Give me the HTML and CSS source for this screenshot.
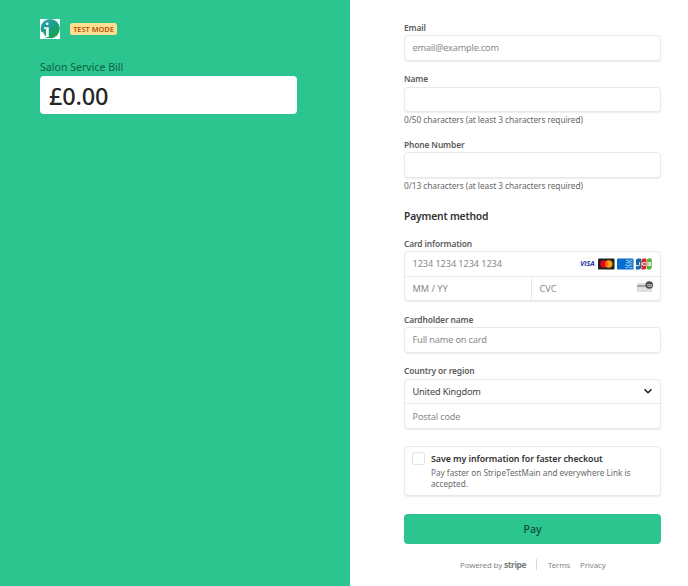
FILE: index.html
```html
<!DOCTYPE html>
<html lang="en">
<head>
<meta charset="utf-8">
<title>Salon Service Bill</title>
<link rel="stylesheet" href="styles.css">
</head>
<body>
<main class="checkout">
  <section class="summary">
    <header class="brand">
      <svg class="logo" viewBox="0 0 20 20" aria-hidden="true">
        <defs><linearGradient id="globe" x1="0" y1="0" x2="0.6" y2="1"><stop offset="0" stop-color="#35a9b5"/><stop offset=".45" stop-color="#1d9c91"/><stop offset="1" stop-color="#16a34e"/></linearGradient></defs>
        <rect width="20" height="20" fill="#fff"/>
        <circle cx="10.2" cy="9.6" r="9.6" fill="url(#globe)"/>
        <circle cx="7.2" cy="4.8" r="1.4" fill="#e8fbf7"/>
        <path d="M4 8.3h4.8V18H6V10H4z" fill="#e8fbf7"/>
        <path d="M0 12l3.5 1.5L6 18v2H0z" fill="#fff" opacity=".85"/>
      </svg>
      <span class="test-badge">TEST MODE</span>
    </header>
    <h1 class="product">Salon Service Bill</h1>
    <div class="amount"><span>£0.00</span></div>
  </section>
  <form class="form">
    <div class="field">
      <div class="label"><span>Email</span></div>
      <div class="box input"><span class="example">email@example.com</span></div>
    </div>
    <div class="field">
      <div class="label"><span>Name</span></div>
      <div class="box input"></div>
      <div class="help">0/50 characters (at least 3 characters required)</div>
    </div>
    <div class="field">
      <div class="label"><span>Phone Number</span></div>
      <div class="box input"></div>
      <div class="help">0/13 characters (at least 3 characters required)</div>
    </div>
    <h2 class="heading">Payment method</h2>
    <div class="field">
      <div class="label"><span>Card information</span></div>
      <div class="box group">
        <div class="row number"><span class="digits-hint">1234 1234 1234 1234</span>
          <svg class="cards" viewBox="0 0 74 12" aria-hidden="true">
            <rect x=".5" y=".5" width="16" height="11" rx="1.2" fill="#fff" stroke="#f0f0f2" stroke-width=".6"/>
            <text class="visa" x="1.2" y="8.4" textLength="14.4" lengthAdjust="spacingAndGlyphs">VISA</text>
            <rect x="19" y=".4" width="16.5" height="11.2" rx="1.2" fill="#20201f"/>
            <circle cx="25" cy="6" r="3.8" fill="#eb001b"/><circle cx="29.7" cy="6" r="3.8" fill="#f79e1b"/><path d="M27.35 3a3.8 3.8 0 0 1 0 6 3.8 3.8 0 0 1 0-6" fill="#ff5f00"/>
            <rect x="38" y=".4" width="16.5" height="11.2" rx="1.2" fill="#016fd0"/>
            <path d="M47 2.3h2.2l1 1.6 1-1.6h2.3M47 4.8h6.5M46 7h2l1 1 1-1h3.5M46.5 9.7h2l1-1 1 1h3" fill="none" stroke="#a5d0f0" stroke-width="1"/>
            <path d="M58.7.4H62v9.2a2 2 0 0 1-2 2h-3V2.4a2 2 0 0 1 1.7-2z" fill="#1267ac"/>
            <path d="M64.2.4h3.2v9.2a2 2 0 0 1-2 2h-3V2.4a2 2 0 0 1 1.8-2z" fill="#d42a25"/>
            <path d="M69.7.4h3v9.2a2 2 0 0 1-2 2h-2.8V2.4a2 2 0 0 1 1.8-2z" fill="#59ad3b"/>
            <path d="M57 7.5q3.6 1.2 3.6-.7V4.3M66.8 4.800q-3.6-1-3.6 1.2t3.6 1.2M68.3 4.7h3v2.7h-3M68.3 6h3" fill="none" stroke="#fff" stroke-width="1"/>
          </svg>
        </div>
        <div class="split">
          <div class="row expiry"><span class="date-hint">MM / YY</span></div>
          <div class="row cvc"><span class="date-hint">CVC</span>
            <svg class="cvc-icon" viewBox="0 0 18 12" aria-hidden="true">
              <rect x="1" y="2" width="15" height="9" rx="1" fill="#dedede"/><path d="M1 4h15v2H1z" fill="#a5a5a5"/><path d="M3 8h7" stroke="#eee"/>
              <circle cx="13.3" cy="4" r="3.8" fill="#4d4d4d"/><text class="digits" x="10.7" y="5.5" textLength="5.2">123</text>
            </svg>
          </div>
        </div>
      </div>
    </div>
    <div class="field">
      <div class="label"><span>Cardholder name</span></div>
      <div class="box input"><span>Full name on card</span></div>
    </div>
    <div class="field">
      <div class="label"><span>Country or region</span></div>
      <div class="box group">
        <div class="row country"><span>United Kingdom</span>
          <svg class="chevron" viewBox="0 0 10 8" aria-hidden="true"><path d="M1.5 2.2 5 5.7l3.5-3.5" fill="none" stroke="#1a1a1a" stroke-width="1.5"/></svg>
        </div>
        <div class="row postal"><span>Postal code</span></div>
      </div>
    </div>
    <div class="box save">
      <span class="checkbox"></span>
      <div>
        <div class="save-title">Save my information for faster checkout</div>
        <div class="save-text">Pay faster on StripeTestMain and everywhere Link is<br>accepted.</div>
      </div>
    </div>
    <button class="pay" type="button">Pay</button>
    <footer class="footer">
      <span class="powered">Powered by</span><b class="stripe">stripe</b><i class="bar"></i><span class="terms">Terms</span><span class="privacy">Privacy</span>
    </footer>
  </form>
</main>
</body>
</html>
```

FILE: styles.css
```css
* { box-sizing: border-box; }
body { margin: 0; background: #fff; font-family: "Noto Sans", "Open Sans", sans-serif; }
.checkout { display: grid; grid-template-columns: 350px 338px; height: 586px; overflow: hidden; white-space: nowrap; }
.summary { background: #2dc58f; padding: 19px 53px 0 40px; }
.brand { display: flex; align-items: center; height: 20px; }
.logo { width: 20px; height: 20px; }
.test-badge { margin-left: 10px; width: 47px; height: 12px; border-radius: 2.5px; background: #ffde92; color: #b45309; font-size: 7.4px; font-weight: 600; line-height: 12.5px; text-align: center; }
.product { margin: 20px 0 0; height: 17px; line-height: 17px; font-size: 10.5px; font-weight: 400; color: #0c6143; letter-spacing: .04px; }
.amount { height: 38px; border-radius: 4px; background: #fff; padding-left: 9px; line-height: 41px; font-size: 23.5px; font-weight: 500; color: #262626; letter-spacing: -.2px; }
.form { padding: 19px 27px 0 54px; font-size: 9.2px; letter-spacing: -.16px; color: #8a8a8a; }
.field { margin-bottom: 9.5px; }
.label { height: 16.4px; line-height: 17px; font-size: 8.4px; font-weight: 600; letter-spacing: -.12px; color: #5c5c5c; }
.box { border: 1px solid #e9e9e9; border-radius: 4px; background: #fff; box-shadow: 0 1px 1.5px rgba(0,0,0,.08); }
.input { height: 25.6px; line-height: 24px; padding-left: 7.5px; }
.example { letter-spacing: -.2px; }
.digits-hint { letter-spacing: -.1px; }
.date-hint { letter-spacing: 0; }
.help { height: 14px; line-height: 15px; font-size: 8.3px; letter-spacing: -.04px; color: #666; }
.heading { margin: 0 0 5.3px; padding-top: 3px; height: 28px; line-height: 25px; font-size: 10.3px; font-weight: 600; letter-spacing: -.18px; color: #333; }
.group { height: 50px; }
.row { display: flex; align-items: center; justify-content: space-between; height: 24.5px; padding-left: 7.5px; }
.number, .country { border-bottom: 1px solid #e9e9e9; }
.cards { width: 74px; height: 12px; margin-right: 7px; }
.visa { font: italic 700 6.2px "Open Sans", sans-serif; letter-spacing: 0; fill: #2732a5; }
.split { display: grid; grid-template-columns: 127px 128px; }
.expiry { border-right: 1px solid #e9e9e9; }
.cvc-icon { width: 18px; height: 12px; margin: -4px 6px 0 0; }
.digits { font: 700 3.5px "Open Sans", sans-serif; letter-spacing: 0; fill: #ddd; }
.country { color: #444; }
.chevron { width: 10px; height: 8px; margin-right: 7px; }
.save { display: flex; height: 49.5px; margin-top: 17.5px; padding: 5px 7px; }
.checkbox { flex: none; width: 13px; height: 13px; margin: 0 6px 0 0; border: 1px solid #e3e3e3; border-radius: 2.5px; }
.save-title { height: 14.5px; line-height: 13px; font-size: 8.9px; font-weight: 600; letter-spacing: -.08px; color: #333; }
.save-text { line-height: 11.5px; font-size: 8.2px; letter-spacing: 0; color: #6a6a6a; }
.pay { display: block; width: 257px; height: 30px; margin-top: 18px; padding: 0; border: 0; border-radius: 4px; background: #2dc58f; color: #0a5037; font: 500 10.5px "Noto Sans", sans-serif; line-height: 31px; }
.footer { display: flex; align-items: center; height: 14px; margin: 14px 0 0 56px; font-size: 7.8px; letter-spacing: -.06px; color: #858585; }
.powered { width: 44px; }
.stripe { width: 32px; font-size: 8.6px; letter-spacing: -.5px; color: #7c7c7c; }
.bar { width: 1px; height: 11px; background: #d8d8d8; margin-right: 11px; }
.terms { width: 32px; }
```
